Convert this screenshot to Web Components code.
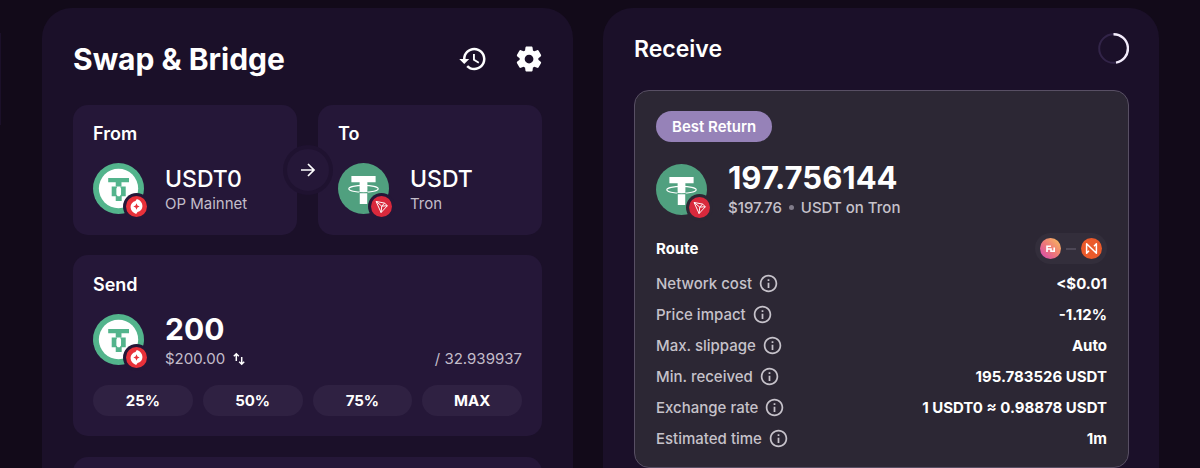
<!DOCTYPE html>
<html lang="en">
<head>
<meta charset="utf-8">
<meta name="viewport" content="width=device-width, initial-scale=1">
<title>Swap &amp; Bridge</title>
<style>
  html { background: #120a19; }
  body {
    margin: 0;
    color: #fff;
    font-family: Inter, "Liberation Sans", sans-serif;
    font-size: 15px;
    line-height: 24px;
    --panel: #1b1029;
    --card: #251738;
    --chip: #2f2142;
    --muted: #c3bdca;
  }
</style>
</head>
<body>
<bridge-page></bridge-page>

<script>
const define = (name, html, setup) => {
  const template = document.createElement('template');
  template.innerHTML = '<style>*{box-sizing:border-box}button{font:inherit;color:inherit;border:0;padding:0;background:none;cursor:pointer}svg{display:block}</style>' + html;
  customElements.define(name, class extends HTMLElement {
    constructor() {
      super();
      this.attachShadow({ mode: 'open' }).append(template.content.cloneNode(true));
    }
    connectedCallback() { if (setup) setup(this, this.shadowRoot); }
  });
};

const coins = {
  usdt0: '<circle cx="24" cy="24" r="24" fill="#53b48c"/><circle cx="24" cy="24" r="18.5" fill="#fff"/><g fill="#53b48c"><path d="M14.300 14.200h19.600v4H26.800v4H21.400v-4H14.300z"/><path fill-rule="evenodd" d="M17.600 22.200h13.200v9h-3.800v4.600h-5.600v-4.600h-3.800zM22.800 22.200l-.8 2v5.500l1.200 1.500h2l1.200-1.500v-5.500l-.8-2z"/></g>',
  usdt: '<circle cx="24" cy="24" r="24" fill="#50a07f"/><path fill="#fff" d="M12.600 12.200h22.800v5.800h-7.900V38.500h-7V18h-7.900z"/><ellipse cx="24" cy="24.300" rx="13.800" ry="3.200" fill="none" stroke="#fff" stroke-width="1.100"/><path fill="#fff" d="M20.500 18h7v8h-7z"/><path d="M20 27.900q4 .3 8 0" stroke="#50a07f" stroke-width="1" fill="none"/>'
};
const chains = {
  op: '<circle cx="12" cy="12" r="12" fill="#e8313a"/><path fill="#fff" d="M12.400 3.400c3.900 1.300 6.400 4.300 6.400 7.900 0 3.500-2.300 6.300-5.600 7l-1.600 2.300c-3.900-1.300-6.400-4.300-6.400-7.900 0-3.500 2.300-6.300 5.600-7z"/><path fill="#e8313a" d="M12 8.400l1.100 2.500 2.500 1.100-2.500 1.100L12 15.600l-1.100-2.500L8.400 12l2.500-1.100z"/>',
  tron: '<circle cx="12" cy="12" r="12" fill="#d9293c"/><path fill="none" stroke="#fff" stroke-width="1.100" stroke-linejoin="round" d="M5.800 6.200l9.700 1.900 3.200 3-7.200 7.800zM5.800 6.200l6.500 5.400 3.200-3.500M12.300 11.600l6.400-.5M12.300 11.600l-.8 7.300"/>'
};

define('token-icon', `
  <style>
    :host { display: block; position: relative; flex: none; width: 51px; height: 51px; }
    .coin { width: 51px; height: 51px; }
    .chain { position: absolute; right: -6px; bottom: -6px; width: 27px; height: 27px; padding: 3px; border-radius: 50%; background: var(--surround, var(--card)); }
    .chain svg { width: 21px; height: 21px; }
  </style>
  <svg class="coin" viewBox="0 0 48 48" aria-hidden="true"></svg>
  <div class="chain"><svg viewBox="0 0 24 24" aria-hidden="true"></svg></div>`,
  (el, root) => {
    root.querySelector('.coin').innerHTML = coins[el.getAttribute('coin')];
    root.querySelector('.chain svg').innerHTML = chains[el.getAttribute('chain')];
  });

define('token-card', `
  <style>
    :host { display: block; flex: 1 1 0; min-width: 0; padding: 17px 20px 21px; border-radius: 15px; background: var(--card); }
    h2 { margin: 0 0 17px; font-size: 18px; line-height: 24px; font-weight: 600; }
    .token { display: flex; gap: 21px; }
    .name { font-size: 23px; line-height: 28px; font-weight: 500; padding-top: 2px; }
    .chain { line-height: 21px; color: var(--muted); }
  </style>
  <h2><slot name="label"></slot></h2>
  <div class="token">
    <slot name="icon"></slot>
    <div><div class="name"><slot name="name"></slot></div><div class="chain"><slot name="chain"></slot></div></div>
  </div>`);

define('send-card', `
  <style>
    :host { display: block; padding: 18px 20px 20px; border-radius: 15px; background: var(--card); }
    h2 { margin: 0 0 17px; font-size: 18px; line-height: 24px; font-weight: 600; }
    .token { display: flex; gap: 21px; }
    .value { flex: 1; min-width: 0; }
    input { display: block; width: 100%; height: 31px; padding: 0; border: 0; outline: 0; background: none; color: #fff; font: 700 30px/31px Inter, sans-serif; }
    .line { display: flex; justify-content: space-between; align-items: center; color: var(--muted); line-height: 28px; }
    .fiat { display: flex; align-items: center; gap: 7px; }
    .fiat svg { width: 14px; height: 14px; color: #fff; }
    .steps { display: flex; gap: 10px; margin-top: 12px; }
    .steps button { flex: 1; height: 31px; border-radius: 16px; background: var(--chip); line-height: 31px; font-weight: 700; }
  </style>
  <h2><label for="amount">Send</label></h2>
  <div class="token">
    <token-icon coin="usdt0" chain="op"></token-icon>
    <div class="value">
      <input id="amount" value="200" inputmode="decimal">
      <div class="line">
        <span class="fiat">$200.00 <button aria-label="Switch currency"><svg viewBox="0 0 14 14" fill="none" stroke="currentColor" stroke-width="1.500"><path d="M4.300 9V2M1.800 4.200l2.500-2.500 2.500 2.500M9.700 5v7M7.200 9.800l2.500 2.500 2.500-2.500"/></svg></button></span>
        <span>/ 32.939937</span>
      </div>
    </div>
  </div>
  <div class="steps"><button>25%</button><button>50%</button><button>75%</button><button>MAX</button></div>`);

define('swap-panel', `
  <style>
    :host { display: block; min-width: 0; padding: 32px 31px 0; border-radius: 30px 30px 0 0; background: var(--panel); }
    header { display: flex; align-items: center; justify-content: space-between; height: 38px; margin-bottom: 27px; }
    h1 { margin: 0; font-size: 30px; line-height: 38px; font-weight: 700; }
    .tools { display: flex; gap: 26px; margin-right: -2px; }
    .tools svg { width: 30px; height: 30px; }
    .pair { display: flex; gap: 21px; position: relative; margin-bottom: 20px; }
    .swap { position: absolute; left: 50%; top: 50%; width: 50px; height: 50px; margin: -25px; border: 4px solid #1f1230; border-radius: 50%; background: var(--card); display: grid; place-items: center; }
    .next { height: 120px; margin-top: 21px; border-radius: 15px; background: var(--card); }
  </style>
  <header>
    <h1>Swap &amp; Bridge</h1>
    <div class="tools">
      <button aria-label="History"><svg viewBox="0 0 24 24" fill="currentColor"><path d="M13 3c-4.970 0-9 4.030-9 9H1l4 4 4-4H6c0-3.870 3.130-7 7-7s7 3.130 7 7-3.130 7-7 7c-1.930 0-3.680-.79-4.940-2.060l-1.420 1.420C8.270 19.990 10.510 21 13 21c4.970 0 9-4.030 9-9s-4.030-9-9-9zm-1 5v5l4.280 2.540.72-1.210-3.500-2.080V8H12z"/></svg></button>
      <button aria-label="Settings"><svg viewBox="0 0 24 24" fill="currentColor"><path d="M19.500 12c0-.23-.01-.45-.03-.68l1.860-1.410c.4-.3.510-.86.260-1.300l-1.870-3.230c-.25-.44-.79-.62-1.250-.42l-2.150.91c-.37-.26-.76-.49-1.170-.68l-.29-2.310c-.06-.5-.49-.88-.99-.88h-3.730c-.51 0-.94.38-1 .88l-.29 2.310c-.41.190-.8.420-1.170.68l-2.150-.91c-.46-.2-1-.02-1.250.42L2.410 8.620c-.25.440-.14.990.26 1.290l1.860 1.410c-.02.230-.03.450-.03.680s.01.450.03.680l-1.860 1.410c-.4.300-.51.860-.26 1.300l1.870 3.230c.25.440.79.620 1.250.42l2.150-.91c.37.260.76.490 1.170.68l.29 2.310c.06.500.49.880.99.880h3.730c.5 0 .93-.38.99-.88l.29-2.310c.41-.19.8-.42 1.170-.68l2.150.91c.46.200 1 .02 1.250-.42l1.870-3.230c.25-.44.140-.99-.26-1.290l-1.860-1.410c.03-.23.040-.45.040-.68zm-7.460 3.500c-1.930 0-3.500-1.570-3.500-3.500s1.570-3.500 3.500-3.500 3.500 1.570 3.500 3.500-1.570 3.500-3.500 3.500z"/></svg></button>
    </div>
  </header>
  <div class="pair">
    <token-card><span slot="label">From</span><token-icon slot="icon" coin="usdt0" chain="op"></token-icon><span slot="name">USDT0</span><span slot="chain">OP Mainnet</span></token-card>
    <token-card><span slot="label">To</span><token-icon slot="icon" coin="usdt" chain="tron"></token-icon><span slot="name">USDT</span><span slot="chain">Tron</span></token-card>
    <button class="swap" aria-label="Swap direction"><svg width="16" height="16" viewBox="0 0 16 16" fill="none" stroke="#fff" stroke-width="1.700"><path d="M1 8h13M8 2l6 6-6 6"/></svg></button>
  </div>
  <send-card></send-card>
  <div class="next"></div>`);

define('quote-row', `
  <style>
    :host { display: flex; justify-content: space-between; align-items: center; height: 31px; }
    .label { display: flex; align-items: center; gap: 6px; color: var(--muted); font-weight: 500; }
    .label svg { width: 21px; height: 21px; }
    .value { font-weight: 700; }
  </style>
  <span class="label"><slot name="label"></slot><button aria-label="More information"><svg viewBox="0 0 24 24" fill="currentColor"><path d="M11 7h2v2h-2zm0 4h2v6h-2zm1-9C6.480 2 2 6.480 2 12s4.480 10 10 10 10-4.480 10-10S17.520 2 12 2zm0 18c-4.410 0-8-3.590-8-8s3.590-8 8-8 8 3.590 8 8-3.590 8-8 8z"/></svg></button></span>
  <span class="value"><slot></slot></span>`);

define('quote-card', `
  <style>
    :host { display: block; --surround: #2c2734; --muted: #c6c2ca; padding: 20px 21px 13px; border: 1px solid #584f64; border-radius: 15px; background: #2c2734; }
    .badge { display: inline-block; height: 31px; padding: 0 16px; border-radius: 16px; background: #9682b8; font-weight: 600; line-height: 31px; vertical-align: top; }
    .token { display: flex; gap: 21px; margin: 22px 0 12px; }
    .amount { font-size: 31px; line-height: 32px; margin-top: -2px; font-weight: 700; }
    .sub { display: flex; align-items: center; gap: 7px; color: var(--muted); line-height: 27px; font-weight: 500; }
    .dot { width: 5px; height: 5px; border-radius: 50%; background: #817c8a; }
    .route { display: flex; justify-content: space-between; align-items: center; height: 31px; margin-bottom: 4px; }
    h3 { margin: 0; font-size: 15px; font-weight: 700; }
    .path { display: flex; align-items: center; gap: 5px; height: 31px; padding: 0 5px; border-radius: 16px; background: #332e3b; }
    .path svg { width: 21px; height: 21px; }
    .path i { width: 10px; height: 2px; background: #4d4756; }
  </style>
  <span class="badge">Best Return</span>
  <div class="token">
    <token-icon coin="usdt" chain="tron"></token-icon>
    <div><div class="amount">197.756144</div><div class="sub"><span>$197.76</span><span class="dot"></span><span>USDT on Tron</span></div></div>
  </div>
  <div class="route"><h3>Route</h3>
    <div class="path">
      <svg viewBox="0 0 21 21" aria-hidden="true"><defs><linearGradient id="g" x1="0" y1="1" x2="1" y2="0"><stop offset=".1" stop-color="#d94fa8"/><stop offset=".5" stop-color="#ee7a77"/><stop offset="1" stop-color="#f8c25c"/></linearGradient></defs><circle cx="10.500" cy="10.500" r="10.500" fill="url(#g)"/><path d="M7 14V8.200h4M7 11h4v2.200h3.200V9.500" fill="none" stroke="#fff" stroke-width="1.600"/></svg>
      <i></i>
      <svg viewBox="0 0 21 21" aria-hidden="true"><circle cx="10.500" cy="10.500" r="10.500" fill="#ea5a2b"/><path d="M8 12.800l-2.400 2.500V5.700l9.800 9.600V5.700L13 8.200" fill="none" stroke="#fff" stroke-width="1.500" stroke-linejoin="round"/></svg>
    </div>
  </div>
  <quote-row><span slot="label">Network cost</span>&lt;$0.01</quote-row>
  <quote-row><span slot="label">Price impact</span>-1.12%</quote-row>
  <quote-row><span slot="label">Max. slippage</span>Auto</quote-row>
  <quote-row><span slot="label">Min. received</span>195.783526 USDT</quote-row>
  <quote-row><span slot="label">Exchange rate</span>1 USDT0 ≈ 0.98878 USDT</quote-row>
  <quote-row><span slot="label">Estimated time</span>1m</quote-row>`);

define('receive-panel', `
  <style>
    :host { display: block; min-width: 0; padding: 25px 30px 30px 31px; border-radius: 30px 30px 0 0; background: var(--panel); }
    header { display: flex; align-items: center; justify-content: space-between; height: 31px; margin-bottom: 26px; }
    h2 { margin: 0; font-size: 23px; line-height: 32px; font-weight: 600; }
    header svg { width: 31px; height: 31px; }
  </style>
  <header><h2>Receive</h2>
    <svg viewBox="0 0 31 31" fill="none" stroke-width="2" role="img" aria-label="Refreshing"><circle cx="15.500" cy="15.500" r="14.300" stroke="#322448"/><path d="M15.500 1.200A14.300 14.300 0 0 1 18 29.600" stroke="#f3ecfb" stroke-width="2.400"/></svg>
  </header>
  <quote-card></quote-card>`);

define('bridge-page', `
  <style>
    :host { display: block; height: 100vh; overflow: hidden; }
    main { display: grid; grid-template-columns: 1px minmax(0, 542fr) minmax(0, 556fr); column-gap: 30px; padding: 8px 41px 0 0; }
    aside { margin-top: 25px; height: 92px; background: var(--panel); }
    swap-panel { margin-left: 11px; }
  </style>
  <main><aside></aside><swap-panel></swap-panel><receive-panel></receive-panel></main>`);
</script>
</body>
</html>
